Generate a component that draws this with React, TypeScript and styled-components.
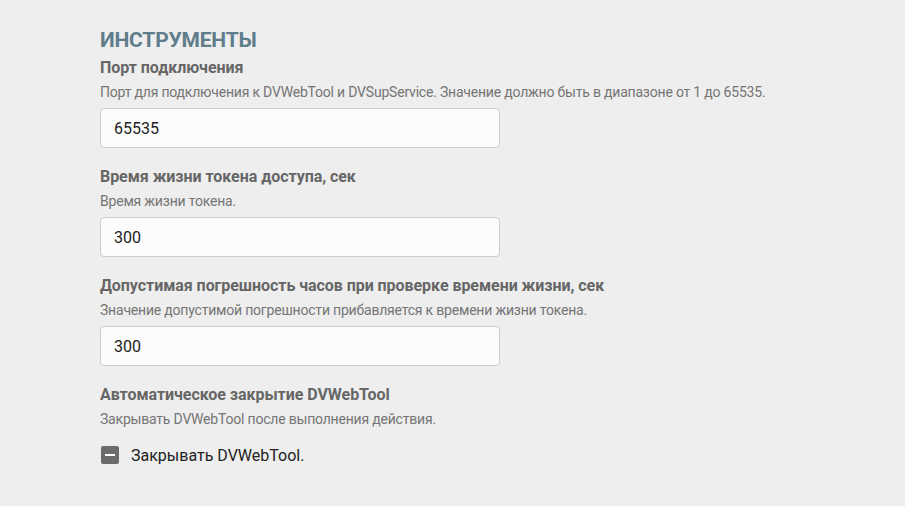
import styled, { createGlobalStyle } from 'styled-components';

const GlobalStyle = createGlobalStyle`
  html, body {
    margin: 0;
    padding: 0;
    background: #eeeeee;
  }
  body {
    font-family: Roboto, 'Liberation Sans', sans-serif;
  }
`;

type Field = {
  label: string;
  hint: string;
  value: string;
};

const fields: Field[] = [
  {
    label: 'Порт подключения',
    hint: 'Порт для подключения к DVWebTool и DVSupService. Значение должно быть в диапазоне от 1 до 65535.',
    value: '65535',
  },
  {
    label: 'Время жизни токена доступа, сек',
    hint: 'Время жизни токена.',
    value: '300',
  },
  {
    label: 'Допустимая погрешность часов при проверке времени жизни, сек',
    hint: 'Значение допустимой погрешности прибавляется к времени жизни токена.',
    value: '300',
  },
];

const App = () => {
  return (
    <>
      <GlobalStyle />
      <Page>
        <Title>ИНСТРУМЕНТЫ</Title>
        {fields.map((f) => (
          <Section key={f.label}>
            <Label>{f.label}</Label>
            <Hint>{f.hint}</Hint>
            <Input defaultValue={f.value} />
          </Section>
        ))}
        <Section>
          <Label>Автоматическое закрытие DVWebTool</Label>
          <Hint>Закрывать DVWebTool после выполнения действия.</Hint>
          <CheckRow>
            <CheckBox>
              <Dash />
            </CheckBox>
            <CheckText>Закрывать DVWebTool.</CheckText>
          </CheckRow>
        </Section>
      </Page>
    </>
  );
};

const Page = styled.div`
  display: flex;
  flex-direction: column;
  padding: 27px 0 0 100px;
  width: 805px;
  height: 479px;
`;

const Title = styled.h1`
  margin: 0;
  font-size: 21px;
  line-height: 26px;
  font-weight: 700;
  letter-spacing: -0.2px;
  color: #607d8b;
`;

const Section = styled.div`
  display: flex;
  flex-direction: column;
  margin-top: 5px;

  & + & {
    margin-top: 19px;
  }
`;

const Label = styled.div`
  font-size: 16px;
  line-height: 20px;
  font-weight: 700;
  letter-spacing: -0.05px;
  color: #666666;
`;

const Hint = styled.div`
  margin-top: 5px;
  font-size: 14px;
  line-height: 18px;
  letter-spacing: -0.2px;
  color: #757575;
`;

const Input = styled.input`
  box-sizing: border-box;
  margin-top: 7px;
  width: 400px;
  height: 40px;
  padding: 0 13px;
  border: 1px solid #cccccc;
  border-radius: 4px;
  background: #fcfcfc;
  font-family: Roboto, 'Liberation Sans', sans-serif;
  font-size: 16px;
  color: #222222;
  outline: none;
`;

const CheckRow = styled.label`
  display: flex;
  align-items: center;
  gap: 12px;
  margin-top: 7px;
  height: 40px;
  cursor: pointer;
`;

const CheckBox = styled.span`
  display: flex;
  align-items: center;
  justify-content: center;
  width: 18px;
  height: 18px;
  margin-left: 1px;
  border-radius: 2px;
  background: #6b6b6b;
`;

const Dash = styled.span`
  width: 10px;
  height: 2px;
  background: #ffffff;
`;

const CheckText = styled.span`
  font-size: 16px;
  color: #222222;
`;

export default App;
